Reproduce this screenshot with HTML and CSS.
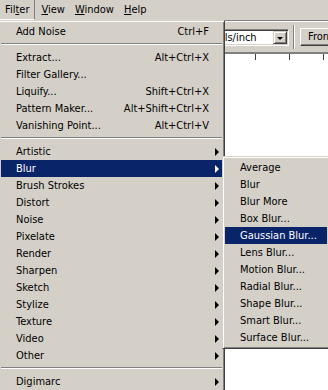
FILE: index.html
```html
<!DOCTYPE html>
<html lang="en">
<head>
    <meta charset="UTF-8">
    <title>Filter menu</title>
    <link rel="stylesheet" href="styles.css">
</head>
<body>
<div class="window">
    <div class="menubar">
        <span class="mb-item open">Fil<u>t</u>er</span>
        <span class="mb-item"><u>V</u>iew</span>
        <span class="mb-item"><u>W</u>indow</span>
        <span class="mb-item"><u>H</u>elp</span>
    </div>
    <div class="toolbar">
        <div class="combo">
            <span class="combo-text">pixels/inch</span>
            <span class="combo-btn"><i class="down"></i></span>
        </div>
        <div class="tb-sep"></div>
        <div class="tb-button">Front Image</div>
    </div>
    <div class="ruler"></div>
    <div class="canvas"></div>

    <!-- Filter menu -->
    <div class="menu main-menu">
        <div class="item"><span>Add Noise</span><span class="key">Ctrl+F</span><span class="slot"></span></div>
        <div class="sep"></div>
        <div class="item"><span>Extract...</span><span class="key">Alt+Ctrl+X</span><span class="slot"></span></div>
        <div class="item"><span>Filter Gallery...</span><span class="slot"></span></div>
        <div class="item"><span>Liquify...</span><span class="key">Shift+Ctrl+X</span><span class="slot"></span></div>
        <div class="item"><span>Pattern Maker...</span><span class="key">Alt+Shift+Ctrl+X</span><span class="slot"></span></div>
        <div class="item"><span>Vanishing Point...</span><span class="key">Alt+Ctrl+V</span><span class="slot"></span></div>
        <div class="sep"></div>
        <div class="item"><span>Artistic</span><span class="slot"><i class="arrow"></i></span></div>
        <div class="item sel"><span>Blur</span><span class="slot"><i class="arrow"></i></span></div>
        <div class="item"><span>Brush Strokes</span><span class="slot"><i class="arrow"></i></span></div>
        <div class="item"><span>Distort</span><span class="slot"><i class="arrow"></i></span></div>
        <div class="item"><span>Noise</span><span class="slot"><i class="arrow"></i></span></div>
        <div class="item"><span>Pixelate</span><span class="slot"><i class="arrow"></i></span></div>
        <div class="item"><span>Render</span><span class="slot"><i class="arrow"></i></span></div>
        <div class="item"><span>Sharpen</span><span class="slot"><i class="arrow"></i></span></div>
        <div class="item"><span>Sketch</span><span class="slot"><i class="arrow"></i></span></div>
        <div class="item"><span>Stylize</span><span class="slot"><i class="arrow"></i></span></div>
        <div class="item"><span>Texture</span><span class="slot"><i class="arrow"></i></span></div>
        <div class="item"><span>Video</span><span class="slot"><i class="arrow"></i></span></div>
        <div class="item"><span>Other</span><span class="slot"><i class="arrow"></i></span></div>
        <div class="sep"></div>
        <div class="item"><span>Digimarc</span><span class="slot"><i class="arrow"></i></span></div>
    </div>

    <!-- Blur submenu -->
    <div class="menu sub-menu">
        <div class="item"><span>Average</span></div>
        <div class="item"><span>Blur</span></div>
        <div class="item"><span>Blur More</span></div>
        <div class="item"><span>Box Blur...</span></div>
        <div class="item sel"><span>Gaussian Blur...</span></div>
        <div class="item"><span>Lens Blur...</span></div>
        <div class="item"><span>Motion Blur...</span></div>
        <div class="item"><span>Radial Blur...</span></div>
        <div class="item"><span>Shape Blur...</span></div>
        <div class="item"><span>Smart Blur...</span></div>
        <div class="item"><span>Surface Blur...</span></div>
    </div>
</div>
</body>
</html>
```

FILE: styles.css
```css
body {
    margin: 0;
    background: #ffffff;
    color: #000000;
    font-family: Tahoma, "DejaVu Sans Condensed", "Liberation Sans", sans-serif;
    font-size: 11px;
}
.window {
    position: relative;
    width: 328px;
    height: 390px;
    overflow: hidden;
    background: #ffffff;
}

/* menu bar */
.menubar {
    display: flex;
    height: 20px;
    background: #d4d0c8;
}
.mb-item {
    padding: 0 5px;
    line-height: 19px;
    white-space: nowrap;
}
.mb-item.open {
    margin-left: -1px;
    margin-right: 1px;
    padding: 0 5px 0 6px;
    border-top: 1px solid #808080;
    border-right: 1px solid #808080;
    border-bottom: 1px solid #ffffff;
    margin-top: -1px;
}

/* options bar */
.toolbar {
    display: flex;
    align-items: flex-start;
    height: 31px;
    padding-left: 194px;
    background: #d4d0c8;
    border-top: 1px solid #808080;
    box-shadow: inset 0 1px #ffffff;
}
.toolbar > div {
    flex: none;
}
.combo {
    display: flex;
    align-items: center;
    box-sizing: border-box;
    width: 95px;
    height: 17px;
    margin-top: 8px;
    background: #ffffff;
    border: 1px solid;
    border-color: #808080 #ffffff #ffffff #808080;
    box-shadow: inset 1px 1px #404040, inset -1px -1px #d4d0c8;
    padding: 1px;
}
.combo-text {
    flex: 1;
    overflow: hidden;
    white-space: nowrap;
    padding-left: 8px;
    line-height: 13px;
}
.combo-btn {
    display: flex;
    align-items: center;
    justify-content: center;
    box-sizing: border-box;
    width: 14px;
    height: 13px;
    background: #d4d0c8;
    border: 1px solid;
    border-color: #d4d0c8 #404040 #404040 #d4d0c8;
    box-shadow: inset 1px 1px #ffffff, inset -1px -1px #808080;
}
.down {
    width: 0;
    height: 0;
    border-top: 3px solid #000000;
    border-left: 3px solid transparent;
    border-right: 3px solid transparent;
    margin-top: 2px;
}
.tb-sep {
    width: 0;
    height: 24px;
    margin: 4px 0 0 4px;
    border-left: 1px solid #808080;
    border-right: 1px solid #ffffff;
}
.tb-button {
    box-sizing: border-box;
    height: 18px;
    margin: 7px 0 0 5px;
    padding: 0 7px;
    line-height: 16px;
    white-space: nowrap;
    background: #d4d0c8;
    border: 1px solid;
    border-color: #ffffff #404040 #404040 #ffffff;
    box-shadow: inset -1px -1px #808080;
}

.ruler {
    height: 7px;
    border-top: 2px solid #808080;
    background: repeating-linear-gradient(to right, transparent 0 33px, #404040 33px 34px) 18px 0 / 100% 6px no-repeat;
}
.canvas {
    height: 320px;
    background: #ffffff;
}

/* popup menus */
.menu {
    position: absolute;
    box-sizing: border-box;
    padding: 2px;
    background: #d4d0c8;
    border: 1px solid;
    border-color: #d4d0c8 #404040 #404040 #d4d0c8;
    box-shadow: inset 1px 1px #ffffff, inset -1px -1px #808080;
}
.main-menu {
    left: -2px;
    top: 20px;
    width: 227px;
}
.sub-menu {
    left: 222px;
    top: 156px;
    width: 108px;
}
.item {
    display: flex;
    align-items: center;
    height: 17px;
    padding-left: 15px;
    white-space: nowrap;
}
.item .key {
    margin-left: auto;
}
.item .slot {
    display: flex;
    align-items: center;
    box-sizing: border-box;
    flex: none;
    width: 13px;
    height: 17px;
    padding-left: 6px;
    margin-left: auto;
}
.item .key + .slot {
    margin-left: 0;
}
.item.sel {
    background: #0a246a;
    color: #ffffff;
}
.arrow {
    width: 0;
    height: 0;
    border-left: 4px solid #000000;
    border-top: 4px solid transparent;
    border-bottom: 4px solid transparent;
}
.item.sel .arrow {
    border-left-color: #ffffff;
}
.sep {
    height: 0;
    margin: 3px 0 4px;
    border-top: 1px solid #808080;
    border-bottom: 1px solid #ffffff;
}
```
